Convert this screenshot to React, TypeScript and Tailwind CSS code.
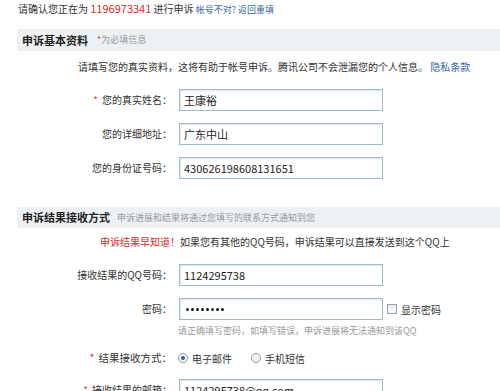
import React from "react";

const font = { fontFamily: '"Noto Sans CJK SC", "Noto Sans", sans-serif' };

function Field({ label, req, children, right }: { label: string; req?: boolean; children?: React.ReactNode; right?: React.ReactNode }) {
  return (
    <div className="flex items-center h-[22px]">
      <div className="w-[172px] shrink-0 text-right text-[10px] text-[#333] leading-[22px] whitespace-nowrap">
        {req && <span className="text-[#e04040] mr-[4px]">*</span>}
        {label}：
      </div>
      <div className="ml-[7px] w-[204px] h-[22px] border border-[#9fbcc4] bg-white shadow-[inset_1px_1px_2px_#d7e6e9] px-[4px] text-[11px] leading-[20px] text-[#222] whitespace-nowrap overflow-hidden">
        {children}
      </div>
      {right}
    </div>
  );
}

function Radio({ checked }: { checked?: boolean }) {
  return (
    <span className="inline-flex items-center justify-center w-[10px] h-[10px] rounded-full border border-[#8e9ba6] bg-[#f4f6f8]">
      {checked && <span className="w-[4px] h-[4px] rounded-full bg-[#2a5fa8]" />}
    </span>
  );
}

export default function App() {
  return (
    <div className="w-[500px] h-[391px] overflow-hidden bg-white text-[#333]" style={font}>
      {/* line 1 */}
      <div className="h-[16px] leading-[16px] pl-[18px] text-[10px] whitespace-nowrap">
        请确认您正在为 <span className="text-[#d0302b] text-[11px]">1196973341</span> 进行申诉{" "}
        <span className="text-[9px] text-[#3568a8]">帐号不对? 返回重填</span>
      </div>

      {/* header 1 */}
      <div className="mt-[13px] ml-[17px] h-[22px] bg-[#edf1f4] flex items-center pl-[5px] whitespace-nowrap">
        <span className="text-[11px] font-bold text-[#222]">申诉基本资料</span>
        <span className="ml-[9px] text-[9px] text-[#999]"><span className="text-[#e04040]">*</span>为必填信息</span>
      </div>

      <div className="mt-[8px] h-[16px] leading-[16px] pl-[78px] text-[10px] whitespace-nowrap">
        请填写您的真实资料，这将有助于帐号申诉。腾讯公司不会泄漏您的个人信息。 <span className="text-[#3568a8]">隐私条款</span>
      </div>

      <div className="mt-[14px]">
        <Field label="您的真实姓名" req>王康裕</Field>
      </div>
      <div className="mt-[12px]">
        <Field label="您的详细地址">广东中山</Field>
      </div>
      <div className="mt-[12px]">
        <Field label="您的身份证号码">430626198608131651</Field>
      </div>

      {/* header 2 */}
      <div className="mt-[28px] ml-[17px] h-[21px] bg-[#edf1f4] flex items-center pl-[5px] whitespace-nowrap">
        <span className="text-[11px] font-bold text-[#222]">申诉结果接收方式</span>
        <span className="ml-[7px] text-[9px] text-[#999]">申诉进展和结果将通过您填写的联系方式通知到您</span>
      </div>

      <div className="mt-[6px] h-[16px] leading-[16px] pl-[100px] text-[10px] whitespace-nowrap">
        <span className="text-[#d42a2a]">申诉结果早知道！</span>如果您有其他的QQ号码，申诉结果可以直接发送到这个QQ上
      </div>

      <div className="mt-[14px]">
        <Field label="接收结果的QQ号码">1124295738</Field>
      </div>
      <div className="mt-[12px]">
        <Field
          label="密码"
          right={
            <div className="ml-[4px] flex items-center text-[10px] whitespace-nowrap">
              <span className="w-[10px] h-[10px] border border-[#9aa3aa] bg-gradient-to-b from-[#e8ecef] to-[#fafbfc]" />
              <span className="ml-[4px]">显示密码</span>
            </div>
          }
        >
          <span className="flex items-center h-[20px] gap-[2px] pl-[2px]">
            {Array.from({ length: 8 }).map((_, i) => (
              <span key={i} className="w-[3px] h-[3px] rounded-full bg-[#111]" />
            ))}
          </span>
        </Field>
      </div>
      <div className="mt-[4px] h-[14px] leading-[14px] pl-[178px] text-[9px] text-[#9a9a9a] whitespace-nowrap">
        请正确填写密码，如填写错误，申诉进展将无法通知到该QQ
      </div>

      <div className="mt-[12px] h-[16px] flex items-center whitespace-nowrap">
        <div className="w-[172px] text-right text-[10.5px]">
          <span className="text-[#e04040] mr-[4px]">*</span>结果接收方式：
        </div>
        <div className="ml-[6px] flex items-center text-[10px]">
          <Radio checked />
          <span className="ml-[4px]">电子邮件</span>
          <span className="ml-[19px]"><Radio /></span>
          <span className="ml-[4px]">手机短信</span>
        </div>
      </div>

      <div className="mt-[13px]">
        <Field label="接收结果的邮箱" req>1124295738@qq.com</Field>
      </div>
    </div>
  );
}
